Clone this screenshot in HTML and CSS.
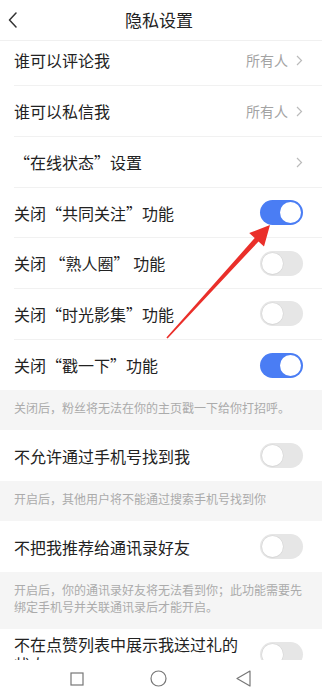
FILE: index.html
```html
<!DOCTYPE html>
<html lang="zh-CN">
<head>
<meta charset="utf-8">
<title>隐私设置</title>
<link rel="stylesheet" href="styles.css">
</head>
<body>
<div class="page">
  <header class="topbar">
    <svg class="back" width="10" height="16" viewBox="0 0 10 16"><path d="M8 1 L1.5 8 L8 15" fill="none" stroke="#333" stroke-width="1.5" stroke-linecap="round" stroke-linejoin="round"/></svg>
    <div class="title">隐私设置</div>
  </header>
  <main class="content">
    <div class="scroll">
      <div class="row"><span class="label">谁可以评论我</span><span class="value">所有人</span><svg class="chev" width="7" height="11" viewBox="0 0 7 11"><path d="M1 1 L5.5 5.5 L1 10" fill="none" stroke="#bbb" stroke-width="1.2"/></svg></div>
      <div class="row"><span class="label">谁可以私信我</span><span class="value">所有人</span><svg class="chev" width="7" height="11" viewBox="0 0 7 11"><path d="M1 1 L5.5 5.5 L1 10" fill="none" stroke="#bbb" stroke-width="1.2"/></svg></div>
      <div class="row"><span class="label">“在线状态”设置</span><svg class="chev" width="7" height="11" viewBox="0 0 7 11"><path d="M1 1 L5.5 5.5 L1 10" fill="none" stroke="#bbb" stroke-width="1.2"/></svg></div>
      <div class="row"><span class="label">关闭“共同关注”功能</span><span class="toggle on"><span class="knob"></span></span></div>
      <div class="row"><span class="label">关闭 “熟人圈” 功能</span><span class="toggle"><span class="knob"></span></span></div>
      <div class="row"><span class="label">关闭“时光影集”功能</span><span class="toggle"><span class="knob"></span></span></div>
      <div class="row last"><span class="label">关闭“戳一下”功能</span><span class="toggle on"><span class="knob"></span></span></div>
      <div class="note">关闭后，粉丝将无法在你的主页戳一下给你打招呼。</div>
      <div class="row last tall"><span class="label">不允许通过手机号找到我</span><span class="toggle"><span class="knob"></span></span></div>
      <div class="note">开启后，其他用户将不能通过搜索手机号找到你</div>
      <div class="row last"><span class="label">不把我推荐给通讯录好友</span><span class="toggle"><span class="knob"></span></span></div>
      <div class="note">开启后，你的通讯录好友将无法看到你；此功能需要先绑定手机号并关联通讯录后才能开启。</div>
      <div class="row multi"><span class="label wrap">不在点赞列表中展示我送过礼的状态</span><span class="toggle"><span class="knob"></span></span></div>
    </div>
  </main>
  <nav class="navbar">
    <svg class="nav-sq" width="14" height="14" viewBox="0 0 14 14"><rect x="1" y="1" width="12" height="12" fill="none" stroke="#777" stroke-width="1.2"/></svg>
    <svg class="nav-ci" width="17" height="17" viewBox="0 0 17 17"><circle cx="8.5" cy="8.5" r="7.5" fill="none" stroke="#777" stroke-width="1.2"/></svg>
    <svg class="nav-tr" width="15" height="17" viewBox="0 0 15 17"><path d="M14 1 L1 8.5 L14 16 Z" fill="none" stroke="#777" stroke-width="1.2" stroke-linejoin="round"/></svg>
  </nav>
  <svg class="arrow" width="322" height="697" viewBox="0 0 322 697"><polygon points="270,225 264,246.5 258.5,241.5 167.6,338.4 166.4,337.6 254.7,238.1 249.2,233.1" fill="#ea2f2a"/></svg>
</div>
</body>
</html>
```

FILE: styles.css
```css
* { box-sizing: border-box; }
html, body { margin: 0; padding: 0; background: #fff; }
body {
  font-family: "Noto Sans CJK SC", "Noto Sans", sans-serif;
  color: #222;
}
.page {
  position: relative;
  width: 322px;
  height: 697px;
  overflow: hidden;
  display: flex;
  flex-direction: column;
  background: #fff;
}
.topbar {
  height: 41px;
  flex: 0 0 41px;
  display: flex;
  align-items: center;
  border-bottom: 1px solid #f0f0f0;
  position: relative;
}
.back { margin-left: 8px; flex: 0 0 auto; }
.title {
  flex: 1;
  text-align: center;
  font-size: 17px;
  color: #222;
  margin-right: 22px;
  line-height: 20px;
}
.content {
  flex: 1;
  overflow: hidden;
}
.scroll { margin-top: -5.4px; }
.row {
  height: 50.7px;
  margin-left: 14px;
  padding-right: 19px;
  display: flex;
  align-items: center;
  border-bottom: 1px solid #f1f1f1;
  font-size: 16px;
}
.row.last { border-bottom: none; }
.row.tall { height: 51px; }
.label { flex: 1; line-height: 20px; white-space: nowrap; }
.label.wrap { white-space: normal; margin-right: 12px; }
.row.multi { height: auto; padding-top: 5px; padding-bottom: 6px; align-items: center; border-bottom: none; }
.value { font-size: 14px; color: #a3a3a3; margin-right: 8px; }
.chev { flex: 0 0 auto; margin-top: 1px; }
.toggle {
  width: 43px;
  height: 25px;
  border-radius: 12.5px;
  background: #e6e6e6;
  position: relative;
  flex: 0 0 auto;
  display: flex;
  align-items: center;
  padding: 0 2px;
}
.toggle .knob {
  width: 21px;
  height: 21px;
  border-radius: 50%;
  background: #fff;
  box-shadow: 0 0 0 0.5px #d6d6d6, 0 1px 1px rgba(0,0,0,0.05);
}
.toggle.on { background: #4a7df4; justify-content: flex-end; }
.toggle.on .knob { box-shadow: none; }
.note {
  background: #f5f5f5;
  color: #ababab;
  font-size: 12px;
  line-height: 17px;
  padding: 9px 14px 14px;
}
.navbar {
  height: 37px;
  flex: 0 0 37px;
  background: #fff;
  display: flex;
  align-items: center;
  position: relative;
  z-index: 1;
}
.nav-sq { margin-left: 70px; }
.nav-ci { margin-left: 66px; }
.nav-tr { margin-left: 69px; }
.arrow {
  position: absolute;
  left: 0;
  top: 0;
  pointer-events: none;
  z-index: 2;
}
```
